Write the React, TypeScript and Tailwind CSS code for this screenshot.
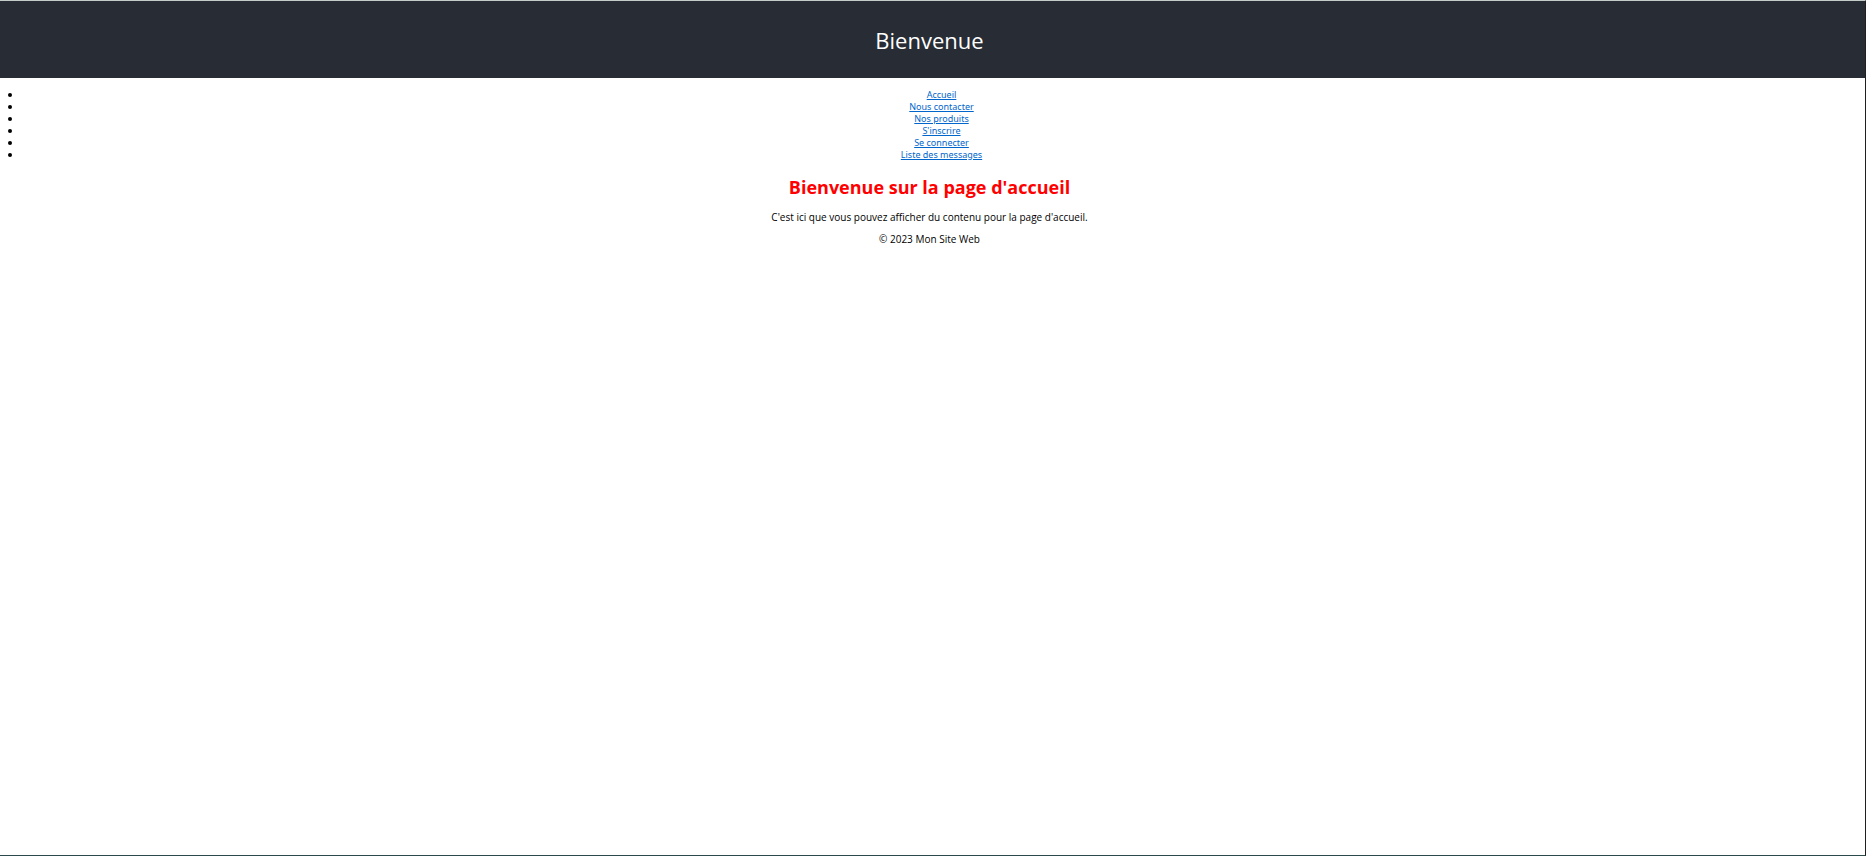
const links = [
  { label: "Accueil", href: "#accueil" },
  { label: "Nous contacter", href: "#contact" },
  { label: "Nos produits", href: "#produits" },
  { label: "S'inscrire", href: "#inscription" },
  { label: "Se connecter", href: "#connexion" },
  { label: "Liste des messages", href: "#messages" },
];

export default function App() {
  return (
    <div className="flex min-h-screen flex-col border-t border-r border-b border-t-[#c5cdc9] border-r-[#1f1f1f] border-b-[#2b4a4c] bg-white text-center font-['Open_Sans',sans-serif] text-[10px] leading-3 text-black">
      <header className="bg-[#282c34] pt-[25px] pr-[6px] pb-6 text-white">
        <p className="text-[22px] leading-7">Bienvenue</p>
      </header>
      <nav className="pt-[10px] pr-1 pl-[22px] font-['Noto_Sans',sans-serif] text-[9px]">
        <ul className="list-disc">
          {links.map((link) => (
            <li key={link.href} className="h-3 marker:text-[10px]">
              <a href={link.href} className="text-[#0066cc] underline">
                {link.label}
              </a>
            </li>
          ))}
        </ul>
      </nav>
      <main className="pt-[15px] pr-[6px]">
        <h1 className="text-[18px] leading-6 font-bold text-[#ff0000]">Bienvenue sur la page d'accueil</h1>
        <p className="mt-3">C'est ici que vous pouvez afficher du contenu pour la page d'accueil.</p>
      </main>
      <footer className="pt-[10px] pr-[6px]">
        <p>© 2023 Mon Site Web</p>
      </footer>
    </div>
  );
}
